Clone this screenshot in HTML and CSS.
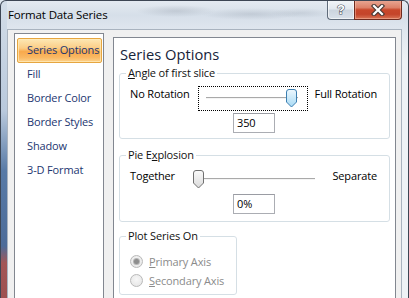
FILE: index.html
```html
<!DOCTYPE html>
<html>
<head>
<meta charset="utf-8">
<link rel="stylesheet" href="styles.css">
</head>
<body>
<div class="window">
  <div class="titlebar">
    <span class="title">Format Data Series</span>
    <div class="caption">
      <div class="cap help"><span>?</span></div>
      <div class="cap close">
        <svg width="16" height="12" viewBox="0 0 16 12"><path d="M4 2 L12 10 M12 2 L4 10" stroke="#4a3a36" stroke-width="4.4" stroke-linecap="square" fill="none"/><path d="M4 2 L12 10 M12 2 L4 10" stroke="#ffffff" stroke-width="2.2" stroke-linecap="square" fill="none"/></svg>
      </div>
    </div>
  </div>
  <div class="client">
    <ul class="nav">
      <li class="item sel">Series Options</li>
      <li class="item">Fill</li>
      <li class="item">Border Color</li>
      <li class="item">Border Styles</li>
      <li class="item">Shadow</li>
      <li class="item">3-D Format</li>
    </ul>
    <div class="panel">
      <h1 class="heading">Series Options</h1>
      <fieldset class="grp g1">
        <legend><u>A</u>ngle of first slice</legend>
        <div class="row r1">
          <span class="lbl l1">No Rotation</span>
          <div class="slider s1">
            <span class="track"></span>
            <svg class="thumb" style="left:87px" width="11" height="19" viewBox="0 0 11 19">
              <defs><linearGradient id="gb" x1="0" y1="0" x2="0" y2="1"><stop offset="0" stop-color="#eef8fe"/><stop offset="1" stop-color="#a6d9f4"/></linearGradient></defs>
              <path d="M0.5 3 Q0.5 0.5 3 0.5 H8 Q10.5 0.5 10.5 3 V13 L5.5 18 L0.5 13 Z" fill="url(#gb)" stroke="#3c7fb1"/>
            </svg>
          </div>
          <span class="lbl end">Full Rotation</span>
        </div>
        <div class="val">350</div>
      </fieldset>
      <fieldset class="grp g2">
        <legend>Pie E<u>x</u>plosion</legend>
        <div class="row r2">
          <span class="lbl l2">Together</span>
          <div class="slider s2">
            <span class="track"></span>
            <svg class="thumb" style="left:0px" width="11" height="19" viewBox="0 0 11 19">
              <defs><linearGradient id="gg" x1="0" y1="0" x2="0" y2="1"><stop offset="0" stop-color="#fbfbfb"/><stop offset="1" stop-color="#dadada"/></linearGradient></defs>
              <path d="M0.5 3 Q0.5 0.5 3 0.5 H8 Q10.5 0.5 10.5 3 V13 L5.5 18 L0.5 13 Z" fill="url(#gg)" stroke="#707070"/>
            </svg>
          </div>
          <span class="lbl end">Separate</span>
        </div>
        <div class="val v2">0%</div>
      </fieldset>
      <fieldset class="grp g3">
        <legend>Plot Series On</legend>
        <div class="radio"><span class="dot on"></span><span class="rlbl"><u>P</u>rimary Axis</span></div>
        <div class="radio"><span class="dot"></span><span class="rlbl"><u>S</u>econdary Axis</span></div>
      </fieldset>
    </div>
  </div>
</div>
</body>
</html>
```

FILE: styles.css
```css
html, body {
  margin: 0;
  padding: 0;
  background: #dfe7ef;
}
body {
  font-family: "Open Sans", "Noto Sans", sans-serif;
  font-size: 11px;
  letter-spacing: -0.15px;
  color: #000;
}
.window {
  box-sizing: border-box;
  width: 409px;
  height: 298px;
  overflow: hidden;
  border: 1px solid #3d4654;
  border-bottom: none;
  border-radius: 6px 6px 0 0;
  display: flex;
  flex-direction: column;
  background:
    linear-gradient(to bottom, #d3dde8 0, #b9c9dc 110px, #587aa6 170px, #4d6c99 245px, #a35656 262px, #9d5050 100%) left top / 6px 100% no-repeat,
    linear-gradient(to bottom, #e4eaf1 0, #d6dfe9 14px, #dfe6ee 28px, #eef2f6 60px, #eef2f6 100%);
}
.titlebar {
  height: 28px;
  flex: none;
  display: flex;
  align-items: flex-start;
  background:
    radial-gradient(ellipse 40px 6px at 175px 10px, rgba(120,130,145,0.25), transparent),
    radial-gradient(ellipse 50px 6px at 250px 13px, rgba(120,130,145,0.22), transparent),
    radial-gradient(ellipse 30px 5px at 300px 12px, rgba(120,130,145,0.18), transparent);
}
.title {
  padding-left: 7px;
  line-height: 27px;
  font-size: 11.5px;
  color: #000;
}
.caption {
  margin-left: auto;
  margin-right: 6px;
  margin-top: -1px;
  display: flex;
}
.cap {
  box-sizing: border-box;
  height: 20px;
  display: flex;
  align-items: center;
  justify-content: center;
  border: 1px solid #5f6b7a;
  border-top: none;
}
.help {
  width: 27px;
  border-right: none;
  border-radius: 0 0 0 4px;
  background: linear-gradient(to bottom, #f3f6f9 0, #e2e8ef 45%, #ccd5df 55%, #d9e1ea 100%);
  box-shadow: inset 0 0 0 1px rgba(255,255,255,0.6);
}
.help span {
  font-family: "Liberation Sans", sans-serif;
  font-weight: bold;
  font-size: 13px;
  color: #fff;
  -webkit-text-stroke: 1.2px #4e5764;
  paint-order: stroke fill;
  line-height: 16px;
}
.close {
  width: 48px;
  border-color: #6e2a1e;
  border-radius: 0 0 4px 0;
  background: linear-gradient(to bottom, #e9a996 0, #dc8169 40%, #c8472b 52%, #c4442a 75%, #d87456 100%);
  box-shadow: inset 0 0 0 1px rgba(255,200,180,0.45);
}
.close svg { display: block; }

.client {
  flex: 1;
  min-height: 0;
  margin: 0 6px;
  border: 1px solid #a9b3bf;
  border-bottom: none;
  background: #f0f0f0;
  display: flex;
  align-items: flex-start;
  padding: 3px 5px 0 6px;
  overflow: hidden;
}
.nav {
  list-style: none;
  margin: 0;
  height: 300px;
  flex: none;
  border: 1px solid #828790;
  background: #fff;
  padding: 4px 1px 0 2px;
  box-sizing: content-box;
  width: 85px;
}
.item {
  box-sizing: border-box;
  height: 24px;
  line-height: 22px;
  padding-left: 9px;
  border: 1px solid transparent;
  color: #1c3670;
  white-space: nowrap;
}
.item.sel {
  height: 25px;
  margin-bottom: -1px;
  border-color: #e6a640;
  border-radius: 2px;
  background: linear-gradient(to bottom, #fde8b4 0, #fbcd86 40%, #f8a94c 55%, #fab863 80%, #fdd38c 100%);
  box-shadow: inset 0 0 0 1px rgba(255,236,190,0.7);
}
.panel {
  margin-left: 9px;
  margin-top: 4px;
  height: 300px;
  flex: none;
  border: 1px solid #828790;
  background: #fff;
  padding: 6px 5px 0 5px;
  box-sizing: content-box;
  width: 271px;
}
.heading {
  margin: 0 0 1px 1px;
  font-size: 14.7px;
  letter-spacing: 0;
  line-height: 20px;
  font-weight: normal;
  color: #17243a;
}
.grp {
  margin: 0;
  padding: 0 0 5px 0;
  border: 1px solid #d5dfe5;
  border-radius: 3px;
  min-width: 0;
}
.grp legend {
  margin-left: 6px;
  padding: 0 2px;
  line-height: 16px;
  color: #111;
}
.g2 { margin-top: 8px; padding-bottom: 7px; }
.g3 { margin-top: 6px; width: 118px; box-sizing: border-box; padding-bottom: 4px; }
.row {
  display: flex;
  align-items: flex-start;
  padding-left: 10px;
  padding-right: 12px;
}
.r1 { margin-top: 5px; height: 25px; }
.r2 { margin-top: 7px; height: 19px; }
.lbl {
  white-space: nowrap;
}
.r1 .lbl { line-height: 16px; }
.r2 .lbl { line-height: 12px; }
.l1 { width: 68px; flex: none; }
.l2 { width: 63px; flex: none; }
.end { margin-left: auto; }
.slider {
  position: relative;
  flex: none;
}
.track {
  position: absolute;
  height: 1px;
  background: #a9a9a9;
  border-bottom: 1px solid #f4f4f4;
}
.thumb { position: absolute; display: block; }
.s1 {
  box-sizing: border-box;
  width: 110px;
  height: 25px;
  border: 1px dotted #000;
}
.s1 .track { left: 7px; right: 9px; top: 10px; }
.s1 .thumb { top: 2px; }
.s2 {
  width: 122px;
  height: 19px;
}
.s2 .track { left: 5px; right: 0; top: 8px; }
.s2 .thumb { top: 0; }
.val {
  box-sizing: border-box;
  width: 42px;
  height: 20px;
  margin: 2px 0 0 113px;
  border: 1px solid #abadb3;
  border-top-color: #9a9ca3;
  padding-left: 3px;
  line-height: 18px;
}
.v2 { margin-top: 5px; }
.radio {
  display: flex;
  align-items: center;
  height: 19px;
  padding-left: 10px;
}
.radio:first-of-type { margin-top: 8px; }
.dot {
  box-sizing: border-box;
  width: 13px;
  height: 13px;
  border-radius: 50%;
  border: 1px solid #b9b9b9;
  background: radial-gradient(circle at 50% 40%, #f7f7f7 0, #e3e3e3 100%);
  flex: none;
  display: flex;
  align-items: center;
  justify-content: center;
}
.dot.on::after {
  content: "";
  width: 5px;
  height: 5px;
  border-radius: 50%;
  background: #8d8d8d;
  box-shadow: 0 0 0 1px #b5b5b5;
}
.rlbl {
  margin-left: 6px;
  color: #8b8b8b;
  white-space: nowrap;
}
```
